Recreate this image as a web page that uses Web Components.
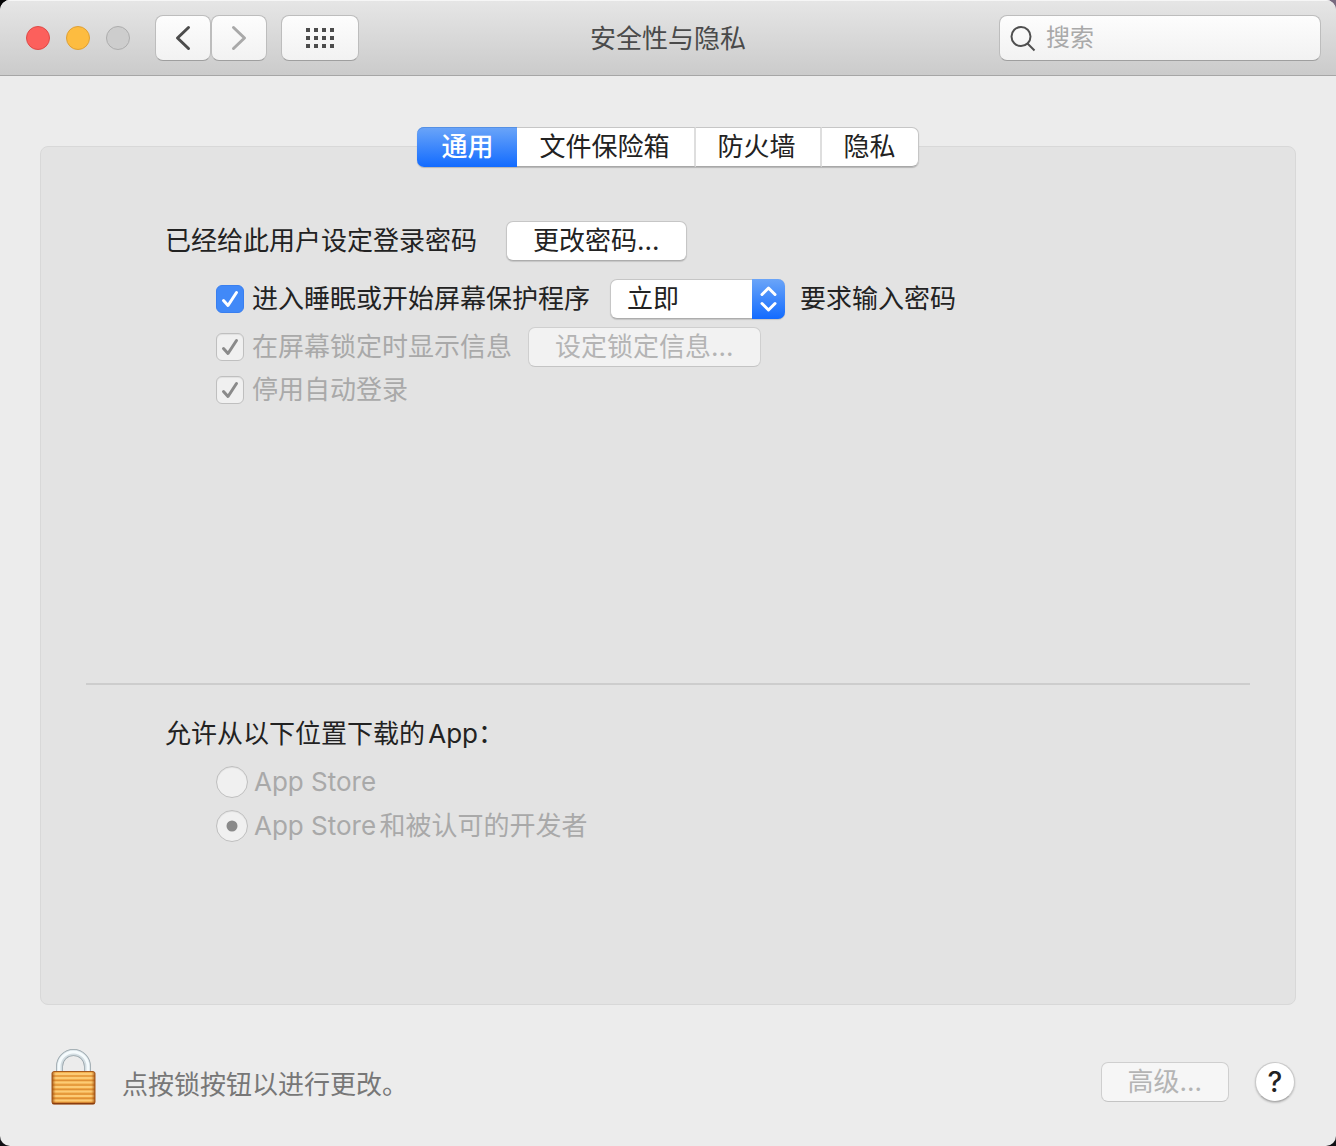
<!DOCTYPE html>
<html lang="zh-CN">
<head>
<meta charset="utf-8">
<title>安全性与隐私</title>
<style>
  html { height: 100%; }
  body {
    margin: 0;
    min-height: 100%;
    display: flex;
    background: linear-gradient(100deg, #050506 0%, #1a1820 60%, #8b7b93 100%) top / 100% 50% no-repeat #101014;
    font: 400 26px/36px Inter, "Noto Sans CJK SC", sans-serif;
    text-autospace: normal;
    color: #222;
  }
</style>
</head>
<body>
<prefs-window>
  <title-bar slot="bar">安全性与隐私</title-bar>
  <tab-strip slot="tabs"></tab-strip>

  <pref-row slot="login">
    <span>已经给此用户设定登录密码</span>
    <push-button style="margin-left:29px">更改密码...</push-button>
  </pref-row>
  <pref-row slot="login" inset style="margin-top:18px">
    <check-option checked>进入睡眠或开始屏幕保护程序</check-option>
    <popup-field value="立即" style="margin-left:20px">要求输入密码</popup-field>
  </pref-row>
  <pref-row slot="login" inset style="margin-top:8px">
    <check-option checked disabled>在屏幕锁定时显示信息</check-option>
    <push-button disabled style="margin-left:16px">设定锁定信息...</push-button>
  </pref-row>
  <pref-row slot="login" inset style="margin-top:8px">
    <check-option checked disabled>停用自动登录</check-option>
  </pref-row>

  <span slot="source">允许从以下位置下载的App：</span>
  <pref-row slot="source" inset style="margin-top:14px">
    <check-option kind="radio" disabled>App Store</check-option>
  </pref-row>
  <pref-row slot="source" inset style="margin-top:12px">
    <check-option kind="radio" checked disabled>App Store和被认可的开发者</check-option>
  </pref-row>

  <lock-note slot="foot">点按锁按钮以进行更改。</lock-note>
  <push-button slot="foot" disabled>高级...</push-button>
  <help-button slot="foot"></help-button>
</prefs-window>

<script>
const define = (name, render) => customElements.define(name, class extends HTMLElement {
  constructor() {
    super();
    this.attachShadow({ mode: 'open' });
  }
  connectedCallback() {
    this.shadowRoot.innerHTML =
      '<style>*{box-sizing:border-box}button,input,select{font:inherit;color:inherit;margin:0}</style>' + render(this);
  }
});

define('prefs-window', () => `
  <style>
    :host { flex: 1; display: flex; flex-direction: column; background: #ececec; border-radius: 10px; overflow: hidden; }
    main { flex: 1; display: flex; flex-direction: column; padding: 51px 40px 0; }
    nav { align-self: center; margin-bottom: -21px; z-index: 1; }
    .panel {
      flex: 1; display: grid; grid-template-rows: 5fr 3fr; padding: 0 45px;
      background: #e3e3e3; border: 1px solid #d8d8d8; border-radius: 8px;
    }
    section { display: flex; flex-direction: column; padding: 74px 79px 16px; }
    section + section { border-top: 2px solid #cdcdcd; padding-top: 31px; }
    footer { display: flex; align-items: center; gap: 26px; padding: 43px 41px 30px 51px; }
  </style>
  <slot name="bar"></slot>
  <main>
    <nav><slot name="tabs"></slot></nav>
    <div class="panel">
      <section><slot name="login"></slot></section>
      <section><slot name="source"></slot></section>
    </div>
  </main>
  <footer><slot name="foot"></slot></footer>`);

define('title-bar', () => `
  <style>
    :host { display: block; }
    header {
      display: grid; grid-template-columns: 1fr auto 1fr; align-items: center; height: 76px; padding: 0 15px;
      background: linear-gradient(#e6e6e6, #cbcbcb); border-bottom: 1px solid #a6a6a6;
      box-shadow: inset 0 1px #f6f6f6; color: #4a4a4a;
    }
    h1 { margin: 0; padding-top: 2px; font: inherit; }
    .left { display: flex; align-items: center; padding-left: 11px; }
    .dot { width: 24px; height: 24px; padding: 0; border-radius: 50%; margin-right: 16px; border: 1px solid; }
    .close { background: #fc605c; border-color: #df4a47; }
    .min { background: #fdbc40; border-color: #dfa035; }
    .zoom { background: #cdcdcd; border-color: #adadad; margin-right: 25px; }
    .tool, .search {
      height: 46px; border: 1px solid #bdbdbd; border-bottom-color: #9f9f9f; border-radius: 8px;
      background: linear-gradient(#fdfdfd, #f2f2f2);
    }
    .tool { display: grid; place-items: center; width: 56px; padding: 0; }
    .tool.grid { width: 78px; margin-left: 14px; }
    svg { display: block; }
    .search { justify-self: end; display: flex; align-items: center; gap: 10px; width: 322px; padding-left: 10px; }
    input { flex: 1; min-width: 0; border: 0; padding: 0; background: none; outline: 0; font-size: 24px; height: 36px; appearance: none; }
    input::placeholder { color: #a9a9a9; opacity: 1; }
  </style>
  <header>
    <div class="left">
      <button class="dot close" aria-label="关闭"></button>
      <button class="dot min" aria-label="最小化"></button>
      <button class="dot zoom" aria-label="缩放" disabled></button>
      <button class="tool" aria-label="后退"><svg width="26" height="28" fill="none" stroke="#4c4c4c" stroke-width="3" stroke-linecap="round" stroke-linejoin="round"><path d="M18.500 3.500 7.500 14l11 10.500"/></svg></button>
      <button class="tool" aria-label="前进" disabled><svg width="26" height="28" fill="none" stroke="#a9a9a9" stroke-width="3" stroke-linecap="round" stroke-linejoin="round"><path d="M7.500 3.500 18.500 14l-11 10.500"/></svg></button>
      <button class="tool grid" aria-label="显示全部"><svg width="28" height="20" fill="#4c4c4c">${
        [0, 8, 16].map(y => [0, 8, 16, 24].map(x => `<rect x="${x}" y="${y}" width="4" height="4"/>`).join('')).join('')
      }</svg></button>
    </div>
    <h1><slot></slot></h1>
    <label class="search">
      <svg width="26" height="28" fill="none" stroke="#4f4f4f" stroke-width="2"><circle cx="11" cy="12.500" r="9.500"/><path d="M17.500 19.500 24.500 26.500"/></svg>
      <input type="search" placeholder="搜索" aria-label="搜索">
    </label>
  </header>`);

define('tab-strip', () => `
  <style>
    :host { display: block; }
    div { display: flex; height: 40px; border-radius: 7px; box-shadow: 0 1px 1px #0003; }
    button {
      border: solid #c6c6c6; border-width: 1px 0; border-bottom-color: #a8a8a8;
      padding: 0 24px 0 22px; background: #fff; line-height: 36px;
    }
    button + button:not(:last-child) { border-right: 2px solid #dedede; }
    button:last-child { border-right: 1px solid #c6c6c6; border-radius: 0 7px 7px 0; padding: 0 22px; }
    button:first-child {
      border: 0; padding: 0 24px; color: #fff; font-weight: 500; border-radius: 7px 0 0 7px;
      background: linear-gradient(#6ba5f8, #126bff); box-shadow: inset 0 1px #5590e4;
    }
  </style>
  <div role="tablist">
    <button role="tab" aria-selected="true">通用</button><button role="tab">文件保险箱</button><button role="tab">防火墙</button><button role="tab">隐私</button>
  </div>`);

define('pref-row', () => `
  <style>
    :host { display: flex; align-items: center; }
    :host([inset]) { padding-left: 51px; }
  </style><slot></slot>`);

define('push-button', el => `
  <style>
    :host { display: block; text-autospace: no-autospace; }
    button {
      display: block; height: 40px; padding: 0 26px; line-height: 36px; background: #fff;
      border: 1px solid #c6c6c6; border-bottom-color: #adadad; border-radius: 7px; box-shadow: 0 1px 1px #0002;
    }
    button:disabled { background: #fff8; color: #b4b4b4; border-color: #cfcfcf; border-bottom-color: #c4c4c4; box-shadow: none; }
  </style>
  <button ${el.hasAttribute('disabled') ? 'disabled' : ''}><slot></slot></button>`);

define('check-option', el => {
  const radio = el.getAttribute('kind') === 'radio';
  const off = el.hasAttribute('disabled');
  const on = el.hasAttribute('checked');
  const mark = radio
    ? '<circle cx="16" cy="16" r="5.500" fill="#8a8a8a"/>'
    : `<path d="M7.500 15.500 12 20.500 20.500 7.500" fill="none" stroke="${off ? '#8a8a8a' : '#fff'}" stroke-width="3" stroke-linecap="round" stroke-linejoin="round"/>`;
  const size = radio ? 32 : 28;
  return `
  <style>
    :host { display: block; }
    label { display: flex; align-items: center; gap: ${radio ? 6 : 8}px; min-height: ${radio ? 32 : 30}px; line-height: 30px; color: ${off ? '#a9a9a9' : '#222'}; }
    .box { display: grid; }
    input, svg { grid-area: 1 / 1; width: ${size}px; height: ${size}px; }
    svg { pointer-events: none; z-index: 1; }
    input {
      appearance: none; border-radius: ${radio ? '50%' : '6px'};
      background: ${off ? '#f0f0f0' : '#4189f8'}; border: 1px solid ${off ? '#bfbfbf' : '#397ff0'};
      ${off ? 'box-shadow: inset 0 1px 1px #0001;' : ''}
    }
  </style>
  <label><span class="box"><input type="${radio ? 'radio' : 'checkbox'}" ${on ? 'checked' : ''} ${off ? 'disabled' : ''}>${
    on ? `<svg aria-hidden="true">${mark}</svg>` : ''}</span><span><slot></slot></span></label>`;
});

define('popup-field', el => `
  <style>
    :host { display: block; }
    label { display: flex; align-items: center; gap: 15px; }
    .pop { display: grid; }
    select, svg { grid-area: 1 / 1; }
    select {
      appearance: none; width: 175px; height: 40px; padding: 0 40px 0 16px; line-height: 36px; background: #fff;
      border: 1px solid #c6c6c6; border-bottom-color: #adadad; border-radius: 7px; box-shadow: 0 1px 1px #0002;
    }
    svg {
      justify-self: end; z-index: 1; pointer-events: none; border-radius: 0 7px 7px 0;
      background: linear-gradient(#6ba5f8, #126bff);
    }
  </style>
  <label>
    <span class="pop">
      <select><option>${el.getAttribute('value')}</option></select>
      <svg width="33" height="40" fill="none" stroke="#fff" stroke-width="3" stroke-linecap="round" stroke-linejoin="round"><path d="m10 15.500 6.500-6.500 6.500 6.500M10 24.500l6.500 6.500 6.500-6.500"/></svg>
    </span>
    <span><slot></slot></span>
  </label>`);

define('lock-note', () => `
  <style>
    :host { flex: 1; display: flex; align-items: center; gap: 26px; color: #777; }
    button { border: 0; padding: 0; background: none; }
    svg { display: block; }
    span { padding-top: 6px; }
  </style>
  <button aria-label="锁">
    <svg width="45" height="68" viewBox="0 0 45 68">
      <defs>
        <linearGradient id="face" x2="0" y2="1"><stop offset="0" stop-color="#f3b04e"/><stop offset="1" stop-color="#eb9d3b"/></linearGradient>
        <linearGradient id="edge"><stop offset="0" stop-color="#8a3c08" stop-opacity=".8"/><stop offset=".09" stop-color="#c06a18" stop-opacity="0"/><stop offset=".91" stop-color="#c06a18" stop-opacity="0"/><stop offset="1" stop-color="#8a3c08" stop-opacity=".8"/></linearGradient>
      </defs>
      <path d="M8.500 26V18.500a14 14 0 0 1 28 0V26" fill="none" stroke="#98a4aa" stroke-width="7"/>
      <path d="M8.500 26V18.500a14 14 0 0 1 28 0V26" fill="none" stroke="#d3dde2" stroke-width="5.500"/>
      <path d="M8 26V18.500a14.500 14.500 0 0 1 29 0V26" fill="none" stroke="#f5fbfd" stroke-width="3"/>
      <rect x="1" y="24" width="43" height="32" rx="1.500" fill="url(#face)"/>
      <g stroke="#fccb75" stroke-width="2">${[26, 30, 34.5, 39, 43.5, 48, 52.5].map(y => `<path d="M1 ${y}h43"/>`).join('')}</g>
      <g stroke="#de9036">${[28, 32.5, 37, 41.5, 46, 50.5].map(y => `<path d="M1 ${y}h43"/>`).join('')}</g>
      <rect x="1" y="24" width="43" height="32" rx="1.500" fill="url(#edge)"/>
      <rect x="1" y="23.500" width="43" height="32.500" rx="2" fill="none" stroke="#a65a1c"/>
      <path d="M1.500 55.500h42" stroke="#8a3d10" stroke-width="1.500"/>
    </svg>
  </button>
  <span><slot></slot></span>`);

define('help-button', () => `
  <style>
    :host { display: block; }
    button {
      display: block; width: 40px; height: 40px; padding: 0; border-radius: 50%; background: #fff; font-size: 28px; font-weight: 500; line-height: 36px;
      border: 1px solid #c9c9c9; border-bottom-color: #adadad; box-shadow: 0 1px 2px #0003;
    }
  </style>
  <button aria-label="帮助">?</button>`);
</script>
</body>
</html>
